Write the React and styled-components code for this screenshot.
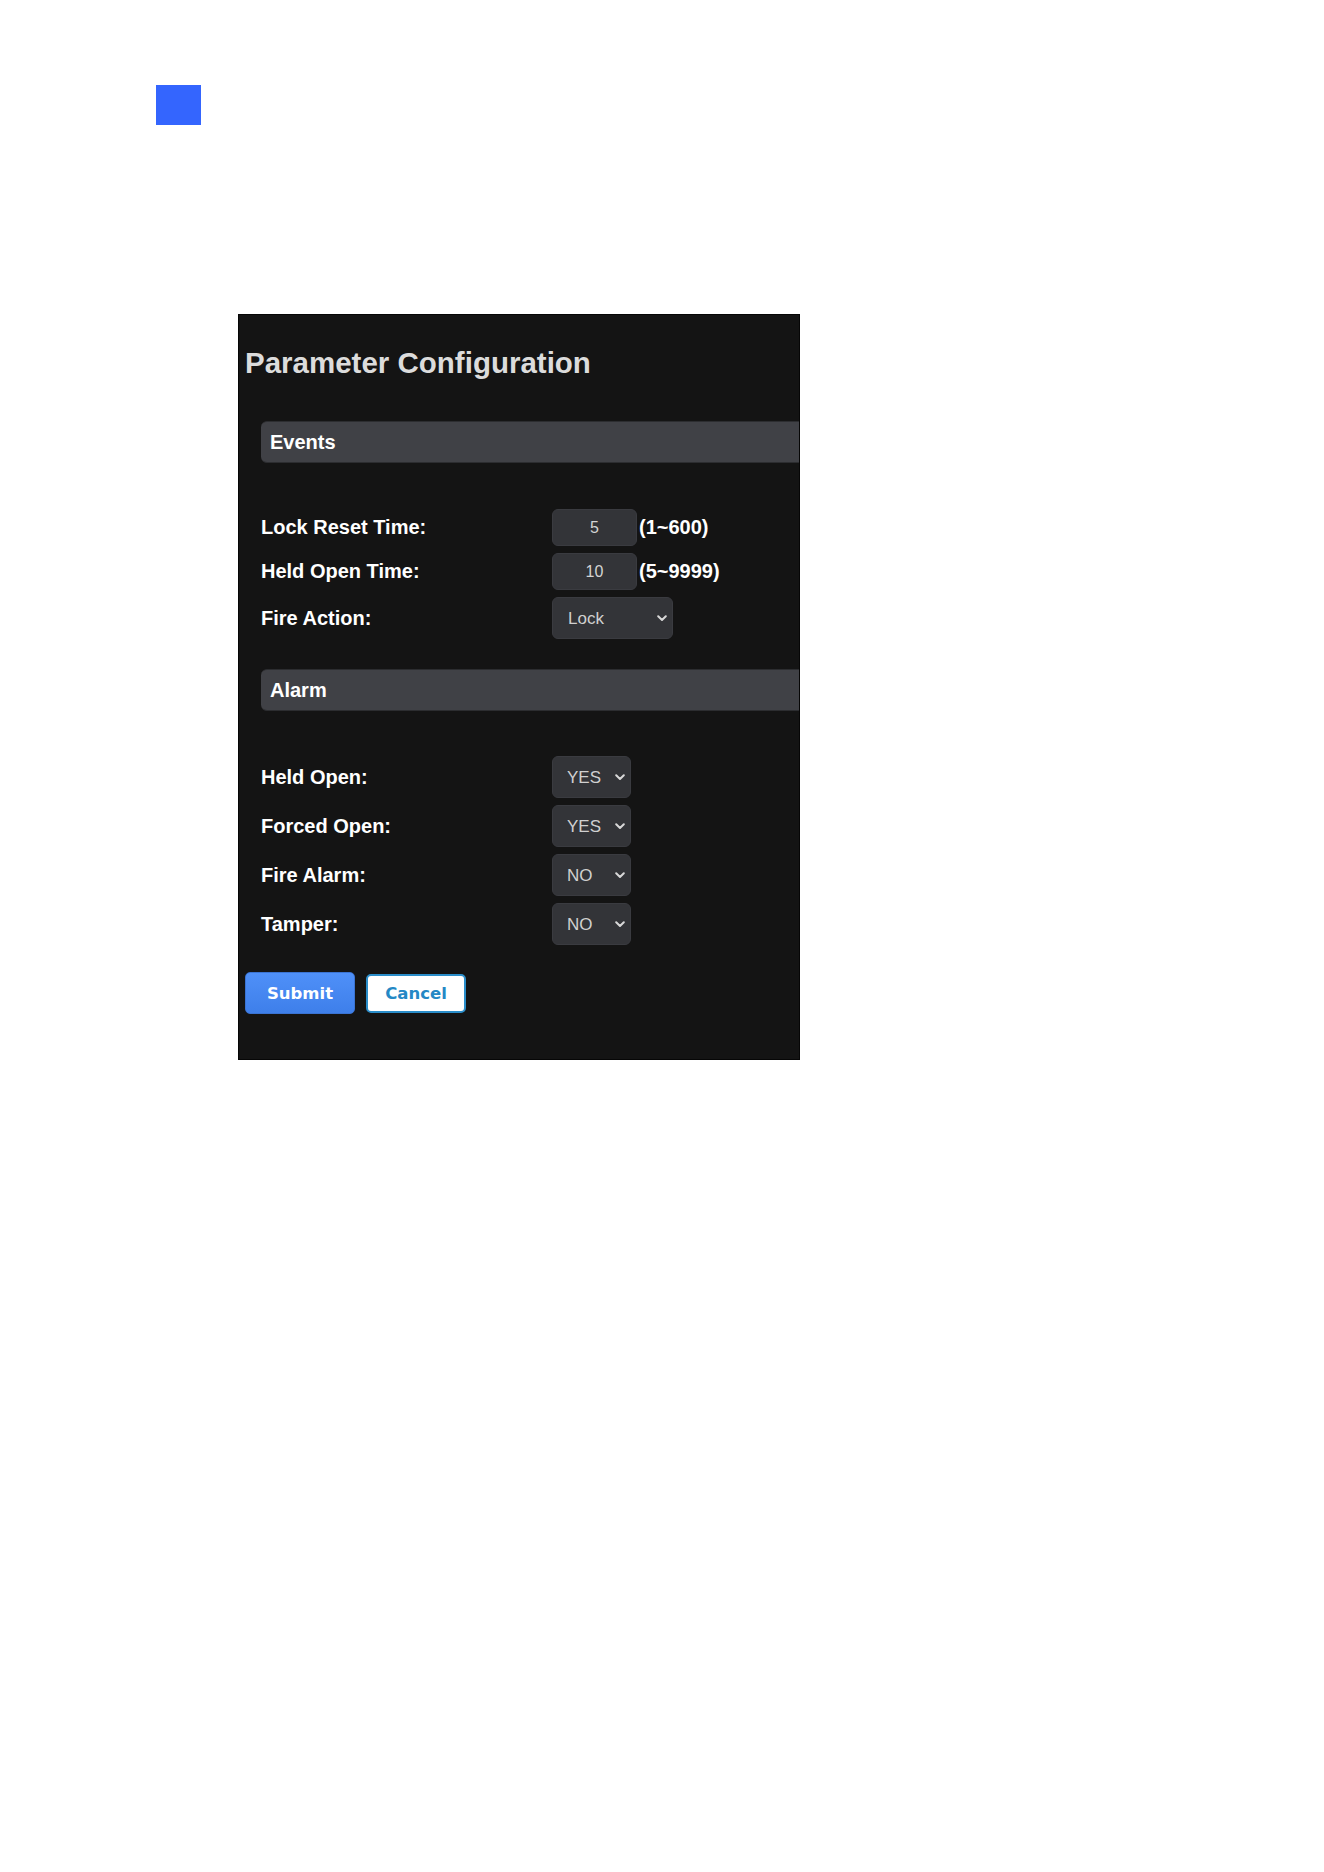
import React, { useState } from 'react'
import styled, { createGlobalStyle } from 'styled-components'

const GlobalStyle = createGlobalStyle`
  body {
    margin: 0;
    background: #fff;
    font-family: "Liberation Sans", Arial, sans-serif;
  }
`

const Page = styled.div`
  padding: 85px 0 0 156px;
  min-height: 1872px;
  box-sizing: border-box;
`

const Marker = styled.div`
  width: 45px;
  height: 40px;
  background: #3465fe;
`

const Panel = styled.div`
  margin: 189px 0 0 82px;
  width: 562px;
  height: 746px;
  box-sizing: border-box;
  background: #141414;
  border: 1px solid #060606;
  overflow: hidden;
  padding: 32px 0 0 6px;
`

const Title = styled.h2`
  margin: 0;
  font-size: 29.5px;
  line-height: 32px;
  font-weight: bold;
  color: #dcdcdc;
`

const Form = styled.div`
  padding-left: 16px;
`

const SectionBar = styled.div`
  height: 42px;
  box-sizing: border-box;
  margin: ${p => p.$top}px 0 ${p => p.$bottom}px 0;
  padding-left: 9px;
  display: flex;
  align-items: center;
  background: #404146;
  border-top: 1px solid #2c2d30;
  border-bottom: 1px solid #2c2d30;
  border-radius: 6px 0 0 6px;
  font-size: 20px;
  font-weight: bold;
  color: #fff;
`

const Rows = styled.div`
  display: grid;
  grid-template-columns: 291px auto;
  row-gap: 7px;
  align-items: center;
`

const Label = styled.div`
  font-size: 20px;
  font-weight: bold;
  color: #fff;
`

const Field = styled.div`
  display: flex;
  align-items: center;
`

const NumberBox = styled.input`
  width: 85px;
  height: 37px;
  box-sizing: border-box;
  background: #333438;
  border: 1px solid #3a3b40;
  border-radius: 6px;
  color: #d4d4d4;
  font-family: "Liberation Sans", Arial, sans-serif;
  font-size: 16px;
  text-align: center;
  outline: none;
`

const Range = styled.span`
  margin-left: 2px;
  font-size: 20px;
  font-weight: bold;
  color: #fff;
`

const SelectWrap = styled.div`
  position: relative;
  width: ${p => p.$width}px;
  height: 42px;
`

const Select = styled.select`
  appearance: none;
  width: 100%;
  height: 100%;
  box-sizing: border-box;
  padding: 0 0 0 ${p => p.$pad}px;
  background: #333438;
  border: 1px solid #3a3b40;
  border-radius: 6px;
  color: #d0d0d0;
  font-family: "Liberation Sans", Arial, sans-serif;
  font-size: 17px;
  outline: none;
`

const Chevron = styled.svg`
  position: absolute;
  right: 6px;
  top: 50%;
  margin-top: -3px;
  pointer-events: none;
`

const Actions = styled.div`
  display: flex;
  align-items: center;
  gap: 11px;
  margin-top: 27px;
`

const Button = styled.button`
  height: ${p => (p.$primary ? 42 : 39)}px;
  width: ${p => (p.$primary ? 110 : 100)}px;
  box-sizing: border-box;
  border-radius: 5px;
  font-family: "DejaVu Sans", Verdana, sans-serif;
  font-size: 16.5px;
  font-weight: bold;
  cursor: pointer;
  background: ${p => (p.$primary ? 'linear-gradient(#4f90f8, #3e7fea)' : '#fff')};
  color: ${p => (p.$primary ? '#fff' : '#2488c5')};
  border: ${p => (p.$primary ? '1px solid #3a73d2' : '2px solid #2a8dc9')};
`

const DropDown = ({ width, pad, value, options, onChange }) => (
  <SelectWrap $width={width}>
    <Select $pad={pad} value={value} onChange={e => onChange(e.target.value)}>
      {options.map(o => (
        <option key={o} value={o}>{o}</option>
      ))}
    </Select>
    <Chevron width="10" height="7" viewBox="0 0 10 7">
      <path d="M1.2 1.2 L5 5 L8.8 1.2" fill="none" stroke="#d8d8d8" strokeWidth="2" strokeLinecap="round" strokeLinejoin="round" />
    </Chevron>
  </SelectWrap>
)

const YES_NO = ['YES', 'NO']

const App = () => {
  const [lockReset, setLockReset] = useState('5')
  const [heldTime, setHeldTime] = useState('10')
  const [fireAction, setFireAction] = useState('Lock')
  const [alarms, setAlarms] = useState({
    held: 'YES',
    forced: 'YES',
    fire: 'NO',
    tamper: 'NO',
  })

  const alarmRows = [
    { key: 'held', label: 'Held Open:' },
    { key: 'forced', label: 'Forced Open:' },
    { key: 'fire', label: 'Fire Alarm:' },
    { key: 'tamper', label: 'Tamper:' },
  ]

  return (
    <>
      <GlobalStyle />
      <Page>
        <Marker />
        <Panel>
          <Title>Parameter Configuration</Title>
          <Form>
            <SectionBar $top={42} $bottom={46}>Events</SectionBar>
            <Rows>
              <Label>Lock Reset Time:</Label>
              <Field>
                <NumberBox value={lockReset} onChange={e => setLockReset(e.target.value)} />
                <Range>(1~600)</Range>
              </Field>
              <Label>Held Open Time:</Label>
              <Field>
                <NumberBox value={heldTime} onChange={e => setHeldTime(e.target.value)} />
                <Range>(5~9999)</Range>
              </Field>
              <Label>Fire Action:</Label>
              <Field>
                <DropDown width={121} pad={15} value={fireAction} options={['Lock', 'Unlock']} onChange={setFireAction} />
              </Field>
            </Rows>

            <SectionBar $top={30} $bottom={45}>Alarm</SectionBar>
            <Rows>
              {alarmRows.map(r => (
                <React.Fragment key={r.key}>
                  <Label>{r.label}</Label>
                  <Field>
                    <DropDown
                      width={79}
                      pad={14}
                      value={alarms[r.key]}
                      options={YES_NO}
                      onChange={v => setAlarms({ ...alarms, [r.key]: v })}
                    />
                  </Field>
                </React.Fragment>
              ))}
            </Rows>
          </Form>
          <Actions>
            <Button $primary>Submit</Button>
            <Button>Cancel</Button>
          </Actions>
        </Panel>
      </Page>
    </>
  )
}

export default App
